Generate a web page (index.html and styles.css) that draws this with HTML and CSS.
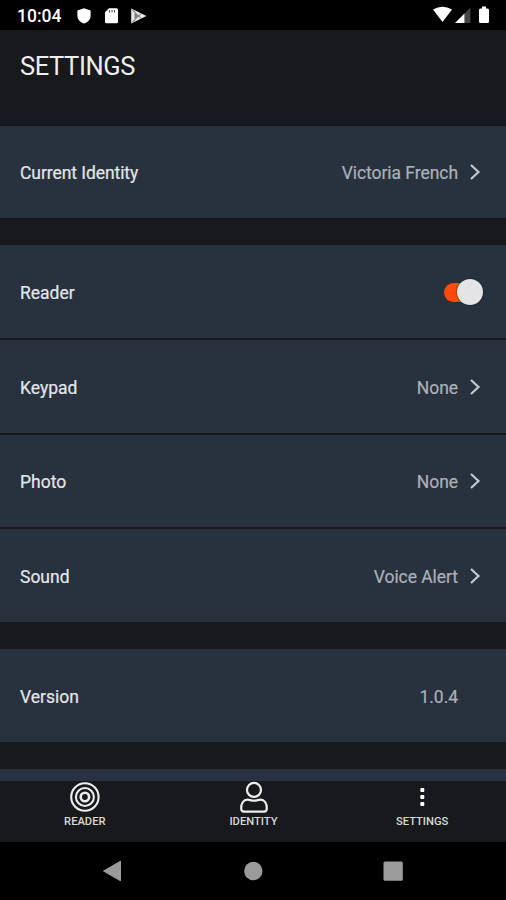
FILE: index.html
```html
<!DOCTYPE html>
<html lang="en">
<head>
<meta charset="utf-8">
<title>Settings</title>
<link rel="stylesheet" href="styles.css">
</head>
<body>
<div class="screen">
  <div class="status">
    <span class="clock">10:04</span>
    <svg class="status-left" width="72" height="18" viewBox="0 0 72 18">
      <path fill="#fff" d="M8 1.200l6.600 2.300v5.200c0 3.600-2.600 6.600-6.600 7.900C4 15.300 1.400 12.300 1.400 8.700V3.500z"/>
      <path fill="#fff" d="M33 1.300h7.500q1.500 0 1.500 1.500v12q0 1.500-1.500 1.500h-10q-1.500 0-1.500-1.500V5.300z"/>
      <path stroke="#555" stroke-width="1.100" d="M33.500 3v2.500M36 3v2.500M38.500 3v2.500"/>
      <path fill="#e6e6e6" d="M55.200 1.500L70.500 9l-15.300 7.500z"/>
      <path fill="none" stroke="#555" stroke-width="1" d="M56.500 3l8.500 8.500M56.500 15L65 6.500"/>
      <path fill="#777" d="M58.500 6l3.500 3-3.500 3z"/>
    </svg>
    <svg class="status-right" width="60" height="20" viewBox="0 0 60 20">
      <path fill="#fff" d="M0 4.500Q9.500-1 19 4.500L9.500 17z"/>
      <path fill="#444" d="M37.500 2.500V18h-6V8.500z"/>
      <path fill="#fff" d="M31.500 8.500V18H22z"/>
      <path fill="#fff" d="M46 5q0-1.500 1.500-1.500H49V1.500h4v2h1.500Q56 3.500 56 5v11.500q0 1.500-1.500 1.500h-7q-1.500 0-1.500-1.500z"/>
    </svg>
  </div>
  <h1 class="title">SETTINGS</h1>
  <main class="list">
    <section class="group">
      <div class="row"><span class="label identity">Current Identity</span><span class="value">Victoria French</span><svg class="chevron" width="12" height="18" viewBox="0 0 12 18"><path d="M2 2l7.500 7L2 16"/></svg></div>
    </section>
    <section class="group">
      <div class="row"><span class="label">Reader</span><span class="switch"><span class="knob"></span></span></div>
      <div class="row"><span class="label">Keypad</span><span class="value">None</span><svg class="chevron" width="12" height="18" viewBox="0 0 12 18"><path d="M2 2l7.500 7L2 16"/></svg></div>
      <div class="row"><span class="label">Photo</span><span class="value">None</span><svg class="chevron" width="12" height="18" viewBox="0 0 12 18"><path d="M2 2l7.500 7L2 16"/></svg></div>
      <div class="row"><span class="label">Sound</span><span class="value">Voice Alert</span><svg class="chevron" width="12" height="18" viewBox="0 0 12 18"><path d="M2 2l7.500 7L2 16"/></svg></div>
    </section>
    <section class="group">
      <div class="row"><span class="label">Version</span><span class="value plain">1.0.4</span></div>
    </section>
    <section class="group"><div class="row"></div></section>
  </main>
  <nav class="tabs">
    <div class="tab">
      <svg width="32" height="32" viewBox="0 0 32 32"><g fill="none" stroke="#eee" stroke-width="2.100"><circle cx="16.900" cy="16" r="13.700"/><circle cx="16.900" cy="16" r="9"/><circle cx="16.900" cy="16" r="4.200" stroke-width="2.600"/></g></svg>
      <span>READER</span>
    </div>
    <div class="tab">
      <svg width="32" height="32" viewBox="0 0 32 32"><g fill="none" stroke="#eee" stroke-width="2.200"><circle cx="17" cy="8.900" r="7"/><path d="M10.500 18.700c2 0 3.500 1 6.500 1s4.500-1 6.500-1c4 0 6.300 3.800 6.300 8.600 0 2.300-1 3.300-2.800 3.300H7c-1.800 0-2.800-1-2.800-3.300 0-4.800 2.300-8.600 6.300-8.600z"/></g></svg>
      <span>IDENTITY</span>
    </div>
    <div class="tab">
      <svg width="32" height="32" viewBox="0 0 32 32"><g fill="#fff"><rect x="14.300" y="7" width="4" height="4" rx="1"/><rect x="14.300" y="14" width="4" height="4" rx="1"/><rect x="14.300" y="21" width="4" height="4" rx="1"/></g></svg>
      <span>SETTINGS</span>
    </div>
  </nav>
  <div class="sysnav">
    <svg width="22" height="22" viewBox="0 0 22 22"><path fill="#9b9b9b" stroke="#9b9b9b" stroke-linejoin="round" d="M2.500 11L19.500 1.200v19.600z"/></svg>
    <svg width="22" height="22" viewBox="0 0 22 22"><circle fill="#9b9b9b" cx="11.300" cy="11" r="9.200"/></svg>
    <svg width="22" height="22" viewBox="0 0 22 22"><rect fill="#9b9b9b" x="1.500" y="1.500" width="19.300" height="19.300" rx="1.500"/></svg>
  </div>
</div>
</body>
</html>
```
FILE: styles.css
```css
* { box-sizing: border-box; }
body { margin: 0; background: #000; font-family: Roboto, "Liberation Sans", sans-serif; }
.screen { width: 506px; height: 900px; display: flex; flex-direction: column; overflow: hidden; background: #17191c; }
.status { flex: none; height: 30px; background: #000; display: flex; align-items: center; padding: 0 13px 0 17px; }
.clock { width: 59px; color: #fff; font-size: 17.500px; font-weight: 500; line-height: 30px; padding-top: 2px; }
.status-left { margin-top: 1px; }
.status-right { margin-left: auto; }
.title { flex: none; height: 95.500px; margin: 0; padding: 20px 20px 0; color: #eee; font-size: 25.500px; font-weight: 400; letter-spacing: -0.400px; line-height: 32px; }
.list { flex: 1; min-height: 0; overflow: hidden; display: flex; flex-direction: column; gap: 27px; }
.group { flex: none; display: flex; flex-direction: column; gap: 2px; }
.row { height: 92.700px; flex: none; background: #28323e; display: flex; align-items: center; padding: 1px 23px 0 20px; }
.label { color: #e4e6e8; font-size: 17.500px; line-height: 24px; padding-top: 2px; -webkit-text-stroke: 0.200px #e4e6e8; }
.identity { letter-spacing: -0.070px; }
.value { margin-left: auto; color: #abb1b8; font-size: 17.500px; letter-spacing: -0.050px; line-height: 24px; padding-top: 2px; -webkit-text-stroke: 0.200px #abb1b8; }
.plain { margin-right: 25px; }
.chevron { margin: 0 2px 0 11px; fill: none; stroke: #c4c8cc; stroke-width: 2.200; }
.switch { margin-left: auto; width: 39px; height: 19px; border-radius: 10px; background: linear-gradient(90deg, #ff4a08 30px, transparent 30px); display: flex; align-items: center; justify-content: flex-end; }
.knob { width: 26px; height: 26px; border-radius: 50%; background: #e4e4e7; flex: none; box-shadow: 0 0 2px #101820; }
.tabs { flex: none; height: 61px; display: grid; grid-template-columns: repeat(3, 1fr); background: #17191c; }
.tab { display: flex; flex-direction: column; align-items: center; color: #d8d8d8; font-size: 11.200px; font-weight: 500; line-height: 14px; }
.tab span { margin: 2px 0 0 1px; }
.sysnav { flex: none; height: 58px; background: #000; display: flex; justify-content: space-between; padding: 18px 102px 0 101px; }
```
